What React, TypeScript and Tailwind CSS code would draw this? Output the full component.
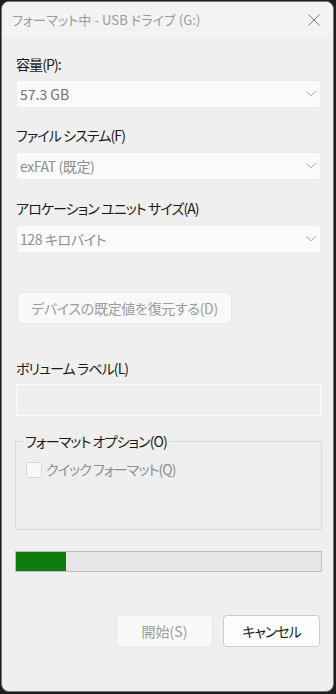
import React from 'react'

const font = { fontFamily: '"Noto Sans CJK JP", "Noto Sans", sans-serif', fontFeatureSettings: '"palt"' }

const Chevron = () => (
  <svg width="10" height="6" viewBox="0 0 10 6" fill="none">
    <path d="M0.5 0.5L5 4.8L9.5 0.5" stroke="#a8a8a8" strokeWidth="1" />
  </svg>
)

const Combo = ({ value, dark }: { value: string; dark?: boolean }) => (
  <div className="flex h-[28px] items-center justify-between rounded-[3px] border border-[#ececec] bg-[#fbfbfb] pl-[3px] pr-[4px]">
    <span className={dark ? 'text-[14px] text-[#707070]' : 'text-[14px] tracking-[-0.4px] text-[#8e8e8e]'}>{value}</span>
    <Chevron />
  </div>
)

const Label = ({ children }: { children: React.ReactNode }) => (
  <div className="text-[14px] leading-[18px] tracking-[-0.9px] text-[#1a1a1a]">{children}</div>
)

export default function App() {
  return (
    <div className="h-[694px] w-[336px] bg-[#1e1e1e] pl-[1px] pt-[1px]" style={font}>
      <div className="flex h-[691px] w-[333px] flex-col overflow-hidden rounded-[8px] border border-[#7a7a7a] bg-[#efefef]">
        <div className="flex h-[35px] shrink-0 items-center justify-between bg-[#f3f3f3] pl-[10px] pr-[13px]">
          <span className="text-[13px] tracking-[0.1px] text-[#9a9a9a]">フォーマット中 - USB ドライブ (G:)</span>
          <svg width="12" height="12" viewBox="0 0 12 12">
            <path d="M0.5 0.5L11.5 11.5M11.5 0.5L0.5 11.5" stroke="#7a7a7a" strokeWidth="1" />
          </svg>
        </div>

        <div className="flex flex-col pl-[14px] pr-[12px]">
          <div className="mt-[18px]">
            <Label>容量(P):</Label>
          </div>
          <div className="mt-[7px]">
            <Combo value="57.3 GB" dark />
          </div>

          <div className="mt-[18px]">
            <Label>ファイル&nbsp;システム(F)</Label>
          </div>
          <div className="mt-[8px]">
            <Combo value="exFAT (既定)" />
          </div>

          <div className="mt-[19px]">
            <Label>アロケーション ユニット サイズ(A)</Label>
          </div>
          <div className="mt-[8px]">
            <Combo value="128 キロバイト" />
          </div>

          <div className="ml-[1px] mt-[39px]">
            <div className="flex h-[32px] w-[215px] items-center justify-center rounded-[4px] border border-[#e6e6e6] bg-[#f9f9f9] text-[14px] tracking-[-0.3px] text-[#9b9b9b]">
              デバイスの既定値を復元する(D)
            </div>
          </div>

          <div className="mt-[35px]">
            <Label>ボリューム ラベル(L)</Label>
          </div>
          <div className="mt-[7px] h-[32px] border border-[#fbfbfb] bg-[#efefef]" />

          <fieldset className="-ml-[1px] -mr-[1px] mt-[17px] h-[97px] border border-[#dadada] px-[7px]">
            <legend className="h-[16px] px-[2px] text-[14px] leading-[16px] tracking-[-0.9px] text-[#1a1a1a]">
              フォーマット オプション(O)
            </legend>
            <div className="ml-[3px] mt-[10px] flex items-center gap-[4px]">
              <div className="h-[16px] w-[16px] rounded-[3px] border border-[#d4d4d4] bg-[#f9f9f9]" />
              <span className="text-[14px] tracking-[-0.9px] text-[#8e8e8e]">クイック フォーマット(Q)</span>
            </div>
          </fieldset>

          <div className="-ml-[1px] -mr-[1px] mt-[21px] h-[21px] border border-[#bcbcbc] bg-[#e6e6e6]">
            <div className="h-full bg-[#107c10]" style={{ width: 50 }} />
          </div>

          <div className="mr-[1px] mt-[43px] flex justify-end gap-[10px]">
            <div className="flex h-[32px] w-[97px] items-center justify-center rounded-[4px] border border-[#e8e8e8] bg-[#f9f9f9] text-[14px] text-[#9d9d9d]">
              開始(S)
            </div>
            <div className="flex h-[32px] w-[97px] items-center justify-center rounded-[4px] border border-[#cccccc] bg-[#fdfdfd] text-[14px] tracking-[-1px] text-[#1a1a1a]">
              キャンセル
            </div>
          </div>
        </div>
      </div>
    </div>
  )
}
